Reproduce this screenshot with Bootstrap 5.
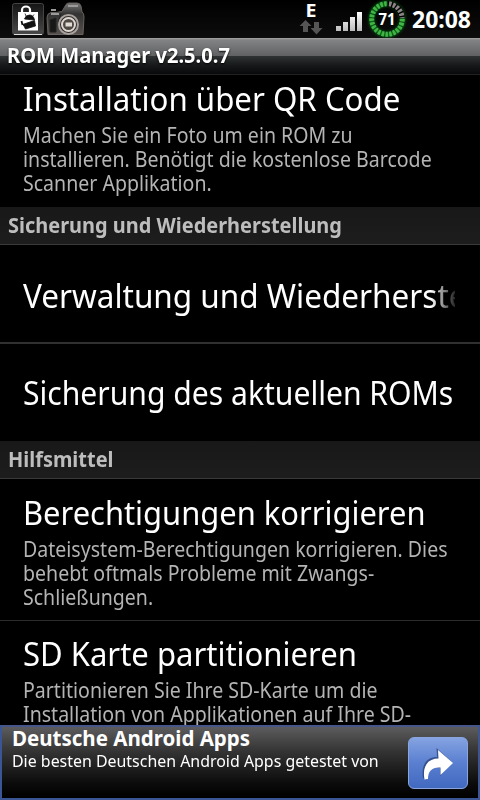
<!DOCTYPE html>
<html lang="de">
<head>
<meta charset="utf-8">
<meta name="viewport" content="width=device-width, initial-scale=1">
<title>ROM Manager</title>
<link rel="stylesheet" href="https://cdn.jsdelivr.net/npm/bootstrap@5.3.0/dist/css/bootstrap.min.css">
<style>
body{font-family:"Noto Sans","Open Sans",sans-serif;background:#000;color:#fff}
.screen{width:480px;height:800px;background:#000}
.status{height:38px;background:linear-gradient(#000,#0d0d0d)}
.status svg{width:480px;height:38px}
.status text{font-family:"Noto Sans",sans-serif;font-weight:700;fill:#fff}
.titlebar{--k:.958;height:37px;line-height:34px;padding-left:7px;font-size:21px;font-weight:700;text-shadow:0 1px 2px #000;
 background:linear-gradient(#a5a5a5 0,#828384 2px,#606162 18px,#303333 18px,#17191a 27px,#08090a 36px,#222 36px)}
.ln{display:block;width:max-content;white-space:nowrap;transform-origin:0 50%;transform:scaleX(var(--k,.94))}
.ttl{font-size:33px;line-height:42px}
.sub{--k:.931;font-size:21px;line-height:24px;color:#b4b4b4;margin-top:3px}
.entry{padding:12px 0 11px 23px;border-bottom:1px solid #2c2c2c}
.entry.first{--k:.946;padding:3px 0 12px 23px;border:0}
.entry.mid{--k:.954;height:99px;padding:30px 0 0 23px;border-bottom:2px solid #303030}
.entry.mid.end{--k:.912;height:97px;padding-top:28px;border:0}
.entry.top{--k:.936;padding-top:13px}
.sect{--k:.95;height:38px;line-height:37px;padding-left:8px;font-size:21px;font-weight:700;color:#bdbdbd;background:linear-gradient(#181818,#1d1d1d);border-bottom:1px solid #393939}
.fade-end{width:432px;-webkit-mask-image:linear-gradient(90deg,#000 408px,transparent 436px);mask-image:linear-gradient(90deg,#000 408px,transparent 436px)}
.ad{height:75px;border:2px solid #3b5694;border-top-color:#46568a;background:linear-gradient(#5c5c5e,#333 35%,#0b0b0b 80%,#000);padding:0 10px}
.ad-h{--k:1;font-size:20.5px;font-weight:700;line-height:23px}
.ad-t{--k:1.027;font-size:15.5px;line-height:23px}
.go{width:60px;height:52px;margin:10px 0 0;border-radius:6px;background:linear-gradient(#85a3e2,#5a7fd0 50%,#4169c0);border:1px solid #88a5e0}
</style>
<script src="https://cdn.jsdelivr.net/npm/bootstrap@5.3.0/dist/js/bootstrap.bundle.min.js"></script>
</head>
<body class="m-0">
<div class="screen d-flex flex-column overflow-hidden">
<header class="status flex-shrink-0">
<svg class="d-block" viewBox="0 0 480 38">
<defs>
<linearGradient id="tile" x2="0" y2="1"><stop stop-color="#151515"/><stop offset="1" stop-color="#4a4a4a"/></linearGradient>
<linearGradient id="bars" x2="0" y2="1"><stop stop-color="#fff"/><stop offset="1" stop-color="#bbb"/></linearGradient>
<linearGradient id="body" x2="0" y2="1"><stop stop-color="#777"/><stop offset=".35" stop-color="#333"/><stop offset="1" stop-color="#55504e"/></linearGradient>
<filter id="glow" x="-30%" y="-30%" width="160%" height="160%"><feGaussianBlur stdDeviation="1.6"/></filter>
</defs>
<rect x="12.500" y="3.500" width="31" height="31" rx="2" fill="url(#tile)" stroke="#444"/>
<path d="M14 34.500h28" stroke="#ddd"/>
<path d="M22 13v-3a4 3.500 0 0 1 8 0v3" fill="none" stroke="#fff" stroke-width="2.200"/>
<path d="M18 12h20v18.500H18z" fill="#fff"/>
<path d="M24.500 19q1-4 5-4t5 5zM22.500 24.500l12-4 1 5.500-10 3-1.500-3zM26 16l-1-2.500M32 17l2-2.500" fill="#111" stroke="#111" stroke-width=".8"/>
<path d="M21.500 21l1 4" stroke="#111" stroke-width="1.800"/>
<path d="M48 34.500l-1-17q0-4 4-5h5l6-1 4-7q1-1.500 3-1.500h8q3 0 4 3l1 6q2 1 2 5l-1 17.500z" fill="url(#body)" stroke="#68615e"/>
<path d="M51 10h5M68 6h10M51 14h8" stroke="#9a9a9a" stroke-width="2"/>
<path d="M50 20v12h6V18zM61 14l-3 8" fill="#171717" stroke="#222"/>
<circle cx="68.500" cy="24.500" r="9.500" fill="#302c2b" stroke="#a8a19e" stroke-width="2"/>
<circle cx="68.500" cy="24.500" r="6.500" fill="#4e4845" stroke="#ddd6d1" stroke-width="2"/>
<path d="M65.500 22.500h6.500v4h-6.500z" fill="#e1dad5"/>
<text x="305.500" y="17" font-size="18" textLength="11" lengthAdjust="spacingAndGlyphs">E</text>
<path d="M305.500 20l6 6h-3.500v6h-5v-6h-3.500zM316.500 34.500l6-6.500H319v-6h-5v6h-3.500z" fill="#555"/>
<path d="M336 26h5v5h-5zM343 22h5v9h-5zM350 17h5v14h-5zM357 12h5v19h-5z" fill="url(#bars)"/>
<circle cx="387" cy="19" r="15.500" fill="none" stroke="#087315" stroke-width="5" filter="url(#glow)"/>
<circle cx="387" cy="19" r="15.300" fill="none" stroke="#42b448" stroke-width="5" pathLength="100" stroke-dasharray="2.600 1.400"/>
<path d="M387.500 3.700A15.300 15.300 0 0 1 402.200 18" fill="none" stroke="#000" stroke-width="6"/>
<path d="M389 3.800A15.300 15.300 0 0 1 402.200 18" fill="none" stroke="#8b8585" stroke-width="5" stroke-dasharray="2.600 1.400"/>
<text x="378.500" y="24.500" font-size="15.500" textLength="17" lengthAdjust="spacingAndGlyphs">71</text>
<text x="412" y="27.500" font-size="23" textLength="59" lengthAdjust="spacingAndGlyphs">20:08</text>
</svg>
</header>
<div class="titlebar flex-shrink-0"><span class="ln">ROM Manager v2.5.0.7</span></div>
<main class="flex-grow-1 overflow-hidden">
<div class="entry first"><div class="ttl"><span class="ln">Installation über QR Code</span></div>
<div class="sub"><span class="ln">Machen Sie ein Foto um ein ROM zu</span><span class="ln">installieren. Benötigt die kostenlose Barcode</span><span class="ln">Scanner Applikation.</span></div></div>
<div class="sect"><span class="ln">Sicherung und Wiederherstellung</span></div>
<div class="entry mid"><div class="ttl fade-end overflow-hidden"><span class="ln">Verwaltung und Wiederherstellung</span></div></div>
<div class="entry mid end"><div class="ttl"><span class="ln">Sicherung des aktuellen ROMs</span></div></div>
<div class="sect"><span class="ln">Hilfsmittel</span></div>
<div class="entry top"><div class="ttl"><span class="ln">Berechtigungen korrigieren</span></div>
<div class="sub"><span class="ln">Dateisystem-Berechtigungen korrigieren. Dies</span><span class="ln">behebt oftmals Probleme mit Zwangs-</span><span class="ln">Schließungen.</span></div></div>
<div class="entry"><div class="ttl"><span class="ln">SD Karte partitionieren</span></div>
<div class="sub"><span class="ln">Partitionieren Sie Ihre SD-Karte um die</span><span class="ln">Installation von Applikationen auf Ihre SD-</span></div></div>
</main>
<footer class="ad d-flex justify-content-between flex-shrink-0">
<div><div class="ad-h"><span class="ln">Deutsche Android Apps</span></div><div class="ad-t"><span class="ln">Die besten Deutschen Android Apps getestet von</span></div></div>
<a href="#" class="go d-block flex-shrink-0" aria-label="Öffnen"><svg class="d-block" viewBox="0 0 60 52" width="60" height="52"><path d="M14 40C12 26 18 19 28 19L27.500 10 43 24 31 38V30C23 29 18 33 18 42z" fill="#243c72" opacity=".7"/><path d="M15.500 41.500C13 28 19 20.500 29.500 20.500L29 12 44 25 31.500 37V29.500C23 29 19 33 19 41z" fill="#fff"/></svg></a>
</footer>
</div>
</body>
</html>
